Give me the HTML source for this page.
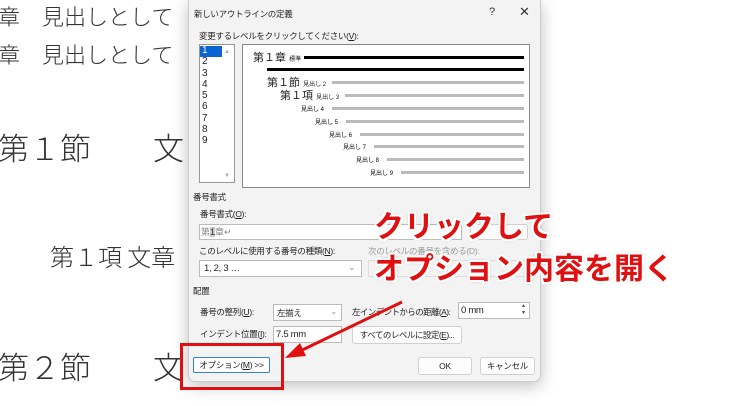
<!DOCTYPE html><html><head><meta charset="utf-8"><style>
*{margin:0;padding:0;box-sizing:border-box}
body{width:740px;height:406px;overflow:hidden;background:#fff;position:relative;font-family:"Liberation Sans","Noto Sans CJK JP",sans-serif}
.a{position:absolute;white-space:nowrap}
.doc{color:#333;font-family:"Noto Sans CJK JP",sans-serif;font-weight:300}
.dlg{position:absolute;left:188px;top:0;width:353px;height:382px;background:#f3f3f3;border:1px solid #ccc;border-top:none;border-radius:0 0 7px 7px;box-shadow:0 4px 16px rgba(0,0,0,.25)}
.s{font-size:8.5px;color:#222;letter-spacing:-0.3px}
.box{position:absolute;background:#fff;border:1px solid #999}
.btn{position:absolute;background:#fdfdfd;border:1px solid #d0d0d0;border-radius:3px;font-size:8.5px;text-align:center;color:#222;white-space:nowrap;letter-spacing:-0.3px}
.ln{position:absolute;height:3px;background:#bbb}
.red{position:absolute;font-family:"Noto Sans CJK JP",sans-serif;font-weight:700;color:#e01010;font-size:30px;line-height:36px;white-space:nowrap;text-shadow:-2px 0 #fff,2px 0 #fff,0 2px #fff,0 -2px #fff,2px 2px #fff,-2px -2px #fff,2px -2px #fff,-2px 2px #fff,0 0 4px rgba(0,0,0,.4)}
</style></head><body>
<div class="a doc" style="left:-2px;top:0;font-size:22px">章　見出しとして</div>
<div class="a doc" style="left:-2px;top:38px;font-size:22px">章　見出しとして</div>
<div class="a doc" style="left:-2px;top:124px;font-size:31px">第１節　　文</div>
<div class="a doc" style="left:50px;top:238px;font-size:24px">第１項 文章</div>
<div class="a doc" style="left:-2px;top:343px;font-size:31px">第２節　　文</div>

<div class="dlg"></div>
<div class="a s" style="left:194px;top:8px">新しいアウトラインの定義</div>
<div class="a" style="left:489px;top:6px;font-size:11px;color:#333">?</div>
<div class="a" style="left:519px;top:4px;font-size:13px;color:#333">✕</div>
<div class="a s" style="left:199px;top:30px">変更するレベルをクリックしてください(<u>V</u>):</div>
<div class="box" style="left:199px;top:44px;width:36px;height:139px"></div>
<div class="a" style="left:200px;top:46px;width:22px;height:11px;background:#0a64d2"></div>
<div class="a" style="left:202px;top:45px;font-size:10px;line-height:11.3px;color:#222"><span style="color:#fff">1</span><br>2<br>3<br>4<br>5<br>6<br>7<br>8<br>9</div>
<div class="a" style="left:224px;top:49px;font-size:6px;color:#aaa">▲</div>
<div class="a" style="left:224px;top:173px;font-size:6px;color:#aaa">▼</div>
<div class="box" style="left:242px;top:44px;width:288px;height:144px;border-color:#888"></div>
<div class="a" style="left:253px;top:49px;font-size:11px;color:#222">第１章 <span style="font-size:6px">標準</span></div>
<div class="a" style="left:304px;top:56px;width:220px;height:3px;background:#000"></div>
<div class="a" style="left:267px;top:68px;width:257px;height:3px;background:#000"></div>
<div class="a" style="left:267px;top:74px;font-size:11px;color:#222">第１節 <span style="font-size:6px">見出し 2</span></div><div class="ln" style="left:332px;top:81px;width:192px"></div>
<div class="a" style="left:280px;top:87px;font-size:11px;color:#222">第１項 <span style="font-size:6px">見出し 3</span></div><div class="ln" style="left:345px;top:94px;width:179px"></div>
<div class="a" style="left:301px;top:104px;font-size:6px">見出し 4</div><div class="ln" style="left:332px;top:107px;width:192px"></div>
<div class="a" style="left:315px;top:117px;font-size:6px">見出し 5</div><div class="ln" style="left:346px;top:120px;width:178px"></div>
<div class="a" style="left:329px;top:130px;font-size:6px">見出し 6</div><div class="ln" style="left:360px;top:133px;width:164px"></div>
<div class="a" style="left:343px;top:142px;font-size:6px">見出し 7</div><div class="ln" style="left:374px;top:145px;width:150px"></div>
<div class="a" style="left:356px;top:155px;font-size:6px">見出し 8</div><div class="ln" style="left:387px;top:158px;width:137px"></div>
<div class="a" style="left:370px;top:168px;font-size:6px">見出し 9</div><div class="ln" style="left:401px;top:171px;width:123px"></div>

<div class="a s" style="left:193px;top:191px">番号書式</div>
<div class="a s" style="left:200px;top:208px">番号書式(<u>O</u>):</div>
<div class="box" style="left:199px;top:224px;width:263px;height:16px;border-color:#bbb"></div>
<div class="a" style="left:201px;top:226px;font-size:9px;line-height:12px;color:#888">第<span style="background:#ccc;color:#333">1</span>章↵</div>
<div class="btn" style="left:470px;top:224px;width:58px;height:16px"></div>
<div class="a s" style="left:199px;top:245px">このレベルに使用する番号の種類(<u>N</u>):</div>
<div class="box" style="left:199px;top:260px;width:163px;height:17px;border-color:#bbb"></div>
<div class="a s" style="left:204px;top:263px;font-size:9.5px">1, 2, 3 …</div>
<div class="a" style="left:348px;top:262px;font-size:9px;color:#999">⌄</div>
<div class="a s" style="left:368px;top:245px;color:#999">次のレベルの番号を含める(D):</div>
<div class="a" style="left:368px;top:260px;width:160px;height:17px;border:1px solid #ddd;background:#f3f3f3"></div>
<div class="a s" style="left:193px;top:285px">配置</div>
<div class="a s" style="left:200px;top:306px">番号の整列(<u>U</u>):</div>
<div class="box" style="left:273px;top:304px;width:69px;height:17px;border-color:#bbb"></div>
<div class="a s" style="left:277px;top:307px">左揃え</div>
<div class="a" style="left:330px;top:306px;font-size:9px;color:#999">⌄</div>
<div class="a s" style="left:352px;top:306px;letter-spacing:-0.6px">左インデントからの距離(<u>A</u>):</div>
<div class="box" style="left:458px;top:302px;width:72px;height:17px;border-color:#bbb"></div>
<div class="a s" style="left:461px;top:305px;font-size:9.5px">0 mm</div>
<div class="a" style="left:521px;top:303px;font-size:5px;line-height:7px;color:#444">▲<br>▼</div>
<div class="a s" style="left:200px;top:328px">インデント位置(<u>I</u>):</div>
<div class="box" style="left:273px;top:326px;width:69px;height:17px;border-color:#bbb"></div>
<div class="a s" style="left:276px;top:329px;font-size:9.5px">7.5 mm</div>
<div class="btn" style="left:352px;top:326px;width:110px;height:18px;line-height:16px;letter-spacing:-0.5px">すべてのレベルに設定(<u>E</u>)...</div>
<div class="btn" style="left:193px;top:357px;width:77px;height:16px;line-height:14px;border:1px solid #3b7fd0;border-radius:2px">オプション(<u>M</u>) &gt;&gt;</div>
<div class="btn" style="left:418px;top:357px;width:54px;height:18px;line-height:16px">OK</div>
<div class="btn" style="left:480px;top:357px;width:55px;height:18px;line-height:16px">キャンセル</div>

<div class="a" style="left:180px;top:343px;width:104px;height:47px;border:3px solid #e01010"></div>
<svg class="a" style="left:0;top:0" width="740" height="406"><line x1="402" y1="302" x2="296" y2="353" stroke="#e01010" stroke-width="3"/><polygon points="285,358 300,343 306,356" fill="#e01010"/></svg>
<div class="red" style="left:374px;top:206px">クリックして</div>
<div class="red" style="left:374px;top:248px">オプション内容を開く</div>
</body></html>
